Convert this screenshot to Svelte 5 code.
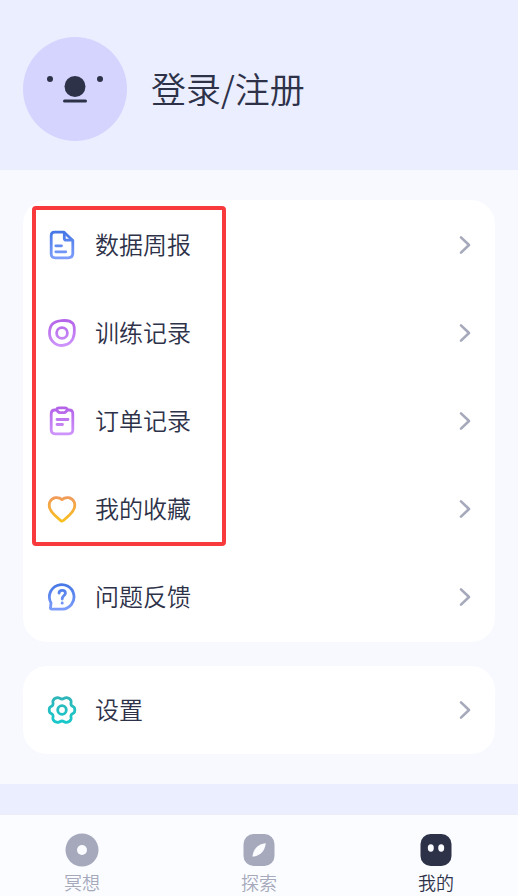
<script>
  const records = [
    { icon: 'report', label: '数据周报' },
    { icon: 'training', label: '训练记录' },
    { icon: 'order', label: '订单记录' },
    { icon: 'heart', label: '我的收藏' },
    { icon: 'question', label: '问题反馈' }
  ];
  const settings = [{ icon: 'gear', label: '设置' }];

  const tabs = [
    { id: 'meditate', label: '冥想' },
    { id: 'explore', label: '探索' },
    { id: 'mine', label: '我的' }
  ];

  let active = $state('mine');
</script>

{#snippet row(item)}
  <li>
    <button class="row">
      <svg class="icon" viewBox="0 0 30 30" aria-hidden="true">
        {#if item.icon === 'report'}
          <g stroke="url(#blue)">
            <path d="M7.5 2.2H17L25.8 10.5V23.3Q25.8 27.8 21.3 27.8H8.2Q4.2 27.8 4.2 23.8V5.5Q4.2 2.2 7.5 2.2Z" />
            <path d="M17.3 3V8.2Q17.3 10.2 19.3 10.2H25" />
            <path d="M8.8 15.8H14.5M8.8 21.8H18.8" />
          </g>
        {:else if item.icon === 'training'}
          <g stroke="url(#purple)">
            <path d="M15 2.6C19.5 2.2 24 3.4 25.8 5.4C27.5 7.4 27.6 11 27.2 15.5C26.6 22.5 21.8 27.5 15 27.5C8.2 27.5 2.5 22 2.5 15.2C2.5 11.5 3 8.6 5.2 6.2C7.6 3.8 11 2.9 15 2.6Z" />
            <circle cx="15" cy="15" r="5.4" />
          </g>
        {:else if item.icon === 'order'}
          <g stroke="url(#purple)">
            <path d="M9.8 4H8Q4.2 4 4.2 8V23.8Q4.2 27.8 8.2 27.8H21.8Q25.8 27.8 25.8 23.8V8Q25.8 4 22 4H20.2" />
            <path d="M12 1.8H18Q20.2 1.8 20.2 4Q18.8 6.6 16.8 6.6H13.2Q11.2 6.6 9.8 4Q9.8 1.8 12 1.8Z" />
            <path d="M10 13.5H21M10 18.5H15.5" />
          </g>
        {:else if item.icon === 'heart'}
          <path stroke="url(#orange)" d="M15 5.6C11.5 2.4 5.2 2.8 2.8 8C1 13 3.8 17.5 7.5 21L13.3 26.3Q15 27.8 16.7 26.3L22.5 21C26.2 17.5 29 13 27.2 8C24.8 2.8 18.5 2.4 15 5.6Z" />
        {:else if item.icon === 'question'}
          <g stroke="url(#blue)">
            <path d="M15.5 27.2H4.8Q3.2 27.2 3.5 25.8L4 21A12.3 12.3 0 1 1 15.5 27.2Z" />
            <path d="M12 11.2Q12.2 8.4 15.2 8.4Q18.4 8.4 18.4 11.2C18.4 13.6 15.2 13.6 15.2 17" />
            <path d="M15.2 21V21.2" />
          </g>
        {:else if item.icon === 'gear'}
          <g stroke="url(#teal)">
            <path d="M15 4C17 4 17.6 2.4 19.6 2.6C21.4 2.9 23.4 4.2 24 5.8C24.6 7.6 23.2 8.4 24.3 10.2C25.2 11.7 27 11.3 27.5 13C27.9 14.3 27.9 15.7 27.5 17C27 18.7 25.2 18.3 24.3 19.8C23.2 21.6 24.6 22.4 24 24.2C23.4 25.8 21.4 27.1 19.6 27.4C17.6 27.6 17 26 15 26C13 26 12.4 27.6 10.4 27.4C8.6 27.1 6.6 25.8 6 24.2C5.4 22.4 6.8 21.6 5.7 19.8C4.8 18.3 3 18.7 2.5 17C2.1 15.7 2.1 14.3 2.5 13C3 11.3 4.8 11.7 5.7 10.2C6.8 8.4 5.4 7.6 6 5.8C6.6 4.2 8.6 2.9 10.4 2.6C12.4 2.4 13 4 15 4Z" />
            <circle cx="15" cy="15" r="4.3" />
          </g>
        {/if}
      </svg>
      <span class="label">{item.label}</span>
      <svg class="chevron" viewBox="0 0 12 20" aria-hidden="true">
        <path d="M2 2.4L10 10L2 17.6" />
      </svg>
    </button>
  </li>
{/snippet}

<div class="page">
  <svg class="defs" aria-hidden="true">
    <defs>
      <linearGradient id="blue" gradientUnits="userSpaceOnUse" x1="0" y1="2" x2="0" y2="28">
        <stop offset="0" stop-color="#4678e6" />
        <stop offset="1" stop-color="#7e9dfb" />
      </linearGradient>
      <linearGradient id="purple" gradientUnits="userSpaceOnUse" x1="0" y1="2" x2="0" y2="28">
        <stop offset="0" stop-color="#b463e8" />
        <stop offset="1" stop-color="#cd94fb" />
      </linearGradient>
      <linearGradient id="orange" gradientUnits="userSpaceOnUse" x1="0" y1="2" x2="0" y2="28">
        <stop offset="0" stop-color="#f19a5c" />
        <stop offset="1" stop-color="#f8c11c" />
      </linearGradient>
      <linearGradient id="teal" gradientUnits="userSpaceOnUse" x1="0" y1="2" x2="0" y2="28">
        <stop offset="0" stop-color="#2fb5b8" />
        <stop offset="1" stop-color="#17c8ca" />
      </linearGradient>
    </defs>
  </svg>

  <header>
    <svg class="avatar" viewBox="0 0 104 104" aria-hidden="true">
      <circle cx="52" cy="52" r="52" fill="#d5d4ff" />
      <g fill="#2e3249">
        <circle cx="27" cy="42" r="3" />
        <circle cx="77" cy="42" r="3" />
        <circle cx="52" cy="49.5" r="10.5" />
        <rect x="40" y="62.5" width="24" height="3" rx="1.5" />
      </g>
    </svg>
    <a class="login" href="#login">登录/注册</a>
  </header>

  <main>
    <ul class="card records">
      {#each records as item}
        {@render row(item)}
      {/each}
    </ul>
    <ul class="card">
      {#each settings as item}
        {@render row(item)}
      {/each}
    </ul>
  </main>

  <nav>
    {#each tabs as tab}
      <button class="tab" class:active={active === tab.id} onclick={() => (active = tab.id)}>
        <svg viewBox="0 0 34 34" aria-hidden="true">
          {#if tab.id === 'meditate'}
            <circle cx="17" cy="17" r="16.5" fill="currentColor" />
            <circle cx="17" cy="17" r="5" fill="#fbfcff" />
          {:else if tab.id === 'explore'}
            <rect x="1.5" y="1" width="31" height="32" rx="10" fill="currentColor" />
            <path d="M23.8 10.2C17 10.8 11.6 14.5 10.4 23.6C17.4 23 22.8 19 23.8 10.2Z" fill="#fbfcff" />
          {:else}
            <rect x="1.5" y="1" width="31" height="32" rx="10" fill="currentColor" />
            <ellipse cx="11.8" cy="15" rx="3" ry="3.7" fill="#fbfcff" />
            <ellipse cx="22.2" cy="15" rx="3" ry="3.7" fill="#fbfcff" />
          {/if}
        </svg>
        <span>{tab.label}</span>
      </button>
    {/each}
  </nav>
</div>

<style>
  :global(body) {
    margin: 0;
    background: #ebeeff;
  }

  .page {
    display: flex;
    flex-direction: column;
    min-height: 100vh;
    color: #2e3249;
    font-family: 'Noto Sans CJK SC', sans-serif;
    font-weight: 350;
  }

  .defs {
    position: absolute;
    width: 0;
    height: 0;
  }

  header {
    display: flex;
    align-items: center;
    gap: 24px;
    padding: 37px 23px 29px;
  }

  .avatar {
    width: 104px;
    height: 104px;
    flex: none;
  }

  .login {
    padding-bottom: 2px;
    color: inherit;
    font-size: 35px;
    line-height: 48px;
    text-decoration: none;
  }

  main {
    display: flex;
    flex-direction: column;
    gap: 24px;
    padding: 30px 23px;
    background: #f7f9fe;
  }

  ul {
    margin: 0;
    padding: 0;
    list-style: none;
  }

  .card {
    position: relative;
    background: #fff;
    border-radius: 24px;
  }

  .records {
    padding: 1px 0;
  }

  /* highlight frame around the first four entries */
  .records::after {
    content: '';
    position: absolute;
    top: 6px;
    left: 9px;
    box-sizing: border-box;
    width: 194px;
    height: 340px;
    border: 4px solid #f83a3d;
    border-radius: 4px;
    pointer-events: none;
  }

  button {
    margin: 0;
    border: 0;
    background: none;
    color: inherit;
    font: inherit;
    cursor: pointer;
  }

  .row {
    display: flex;
    align-items: center;
    width: 100%;
    height: 88px;
    padding: 0 24px;
    font-size: 24px;
    line-height: 32px;
    text-align: left;
  }

  .icon {
    width: 30px;
    height: 30px;
    margin-right: 18px;
    fill: none;
    stroke-width: 2.8;
    stroke-linecap: round;
    stroke-linejoin: round;
  }

  .label {
    flex: 1;
    padding-bottom: 2px;
  }

  .chevron {
    width: 12px;
    height: 20px;
    fill: none;
    stroke: #a5a9bb;
    stroke-width: 2.6;
    stroke-linecap: round;
    stroke-linejoin: round;
  }

  nav {
    display: flex;
    justify-content: space-between;
    margin-top: auto;
    padding: 18px 54px 0;
    border-top: 1px solid #ededf5;
    background: #fbfcff;
  }

  .tab {
    display: flex;
    flex-direction: column;
    align-items: center;
    gap: 3px;
    width: 56px;
    padding: 0 0 1px;
    color: #a5a9bb;
    font-size: 18px;
    line-height: 25px;
  }

  .tab svg {
    width: 34px;
    height: 34px;
  }

  .tab.active {
    color: #2e3249;
  }
</style>
